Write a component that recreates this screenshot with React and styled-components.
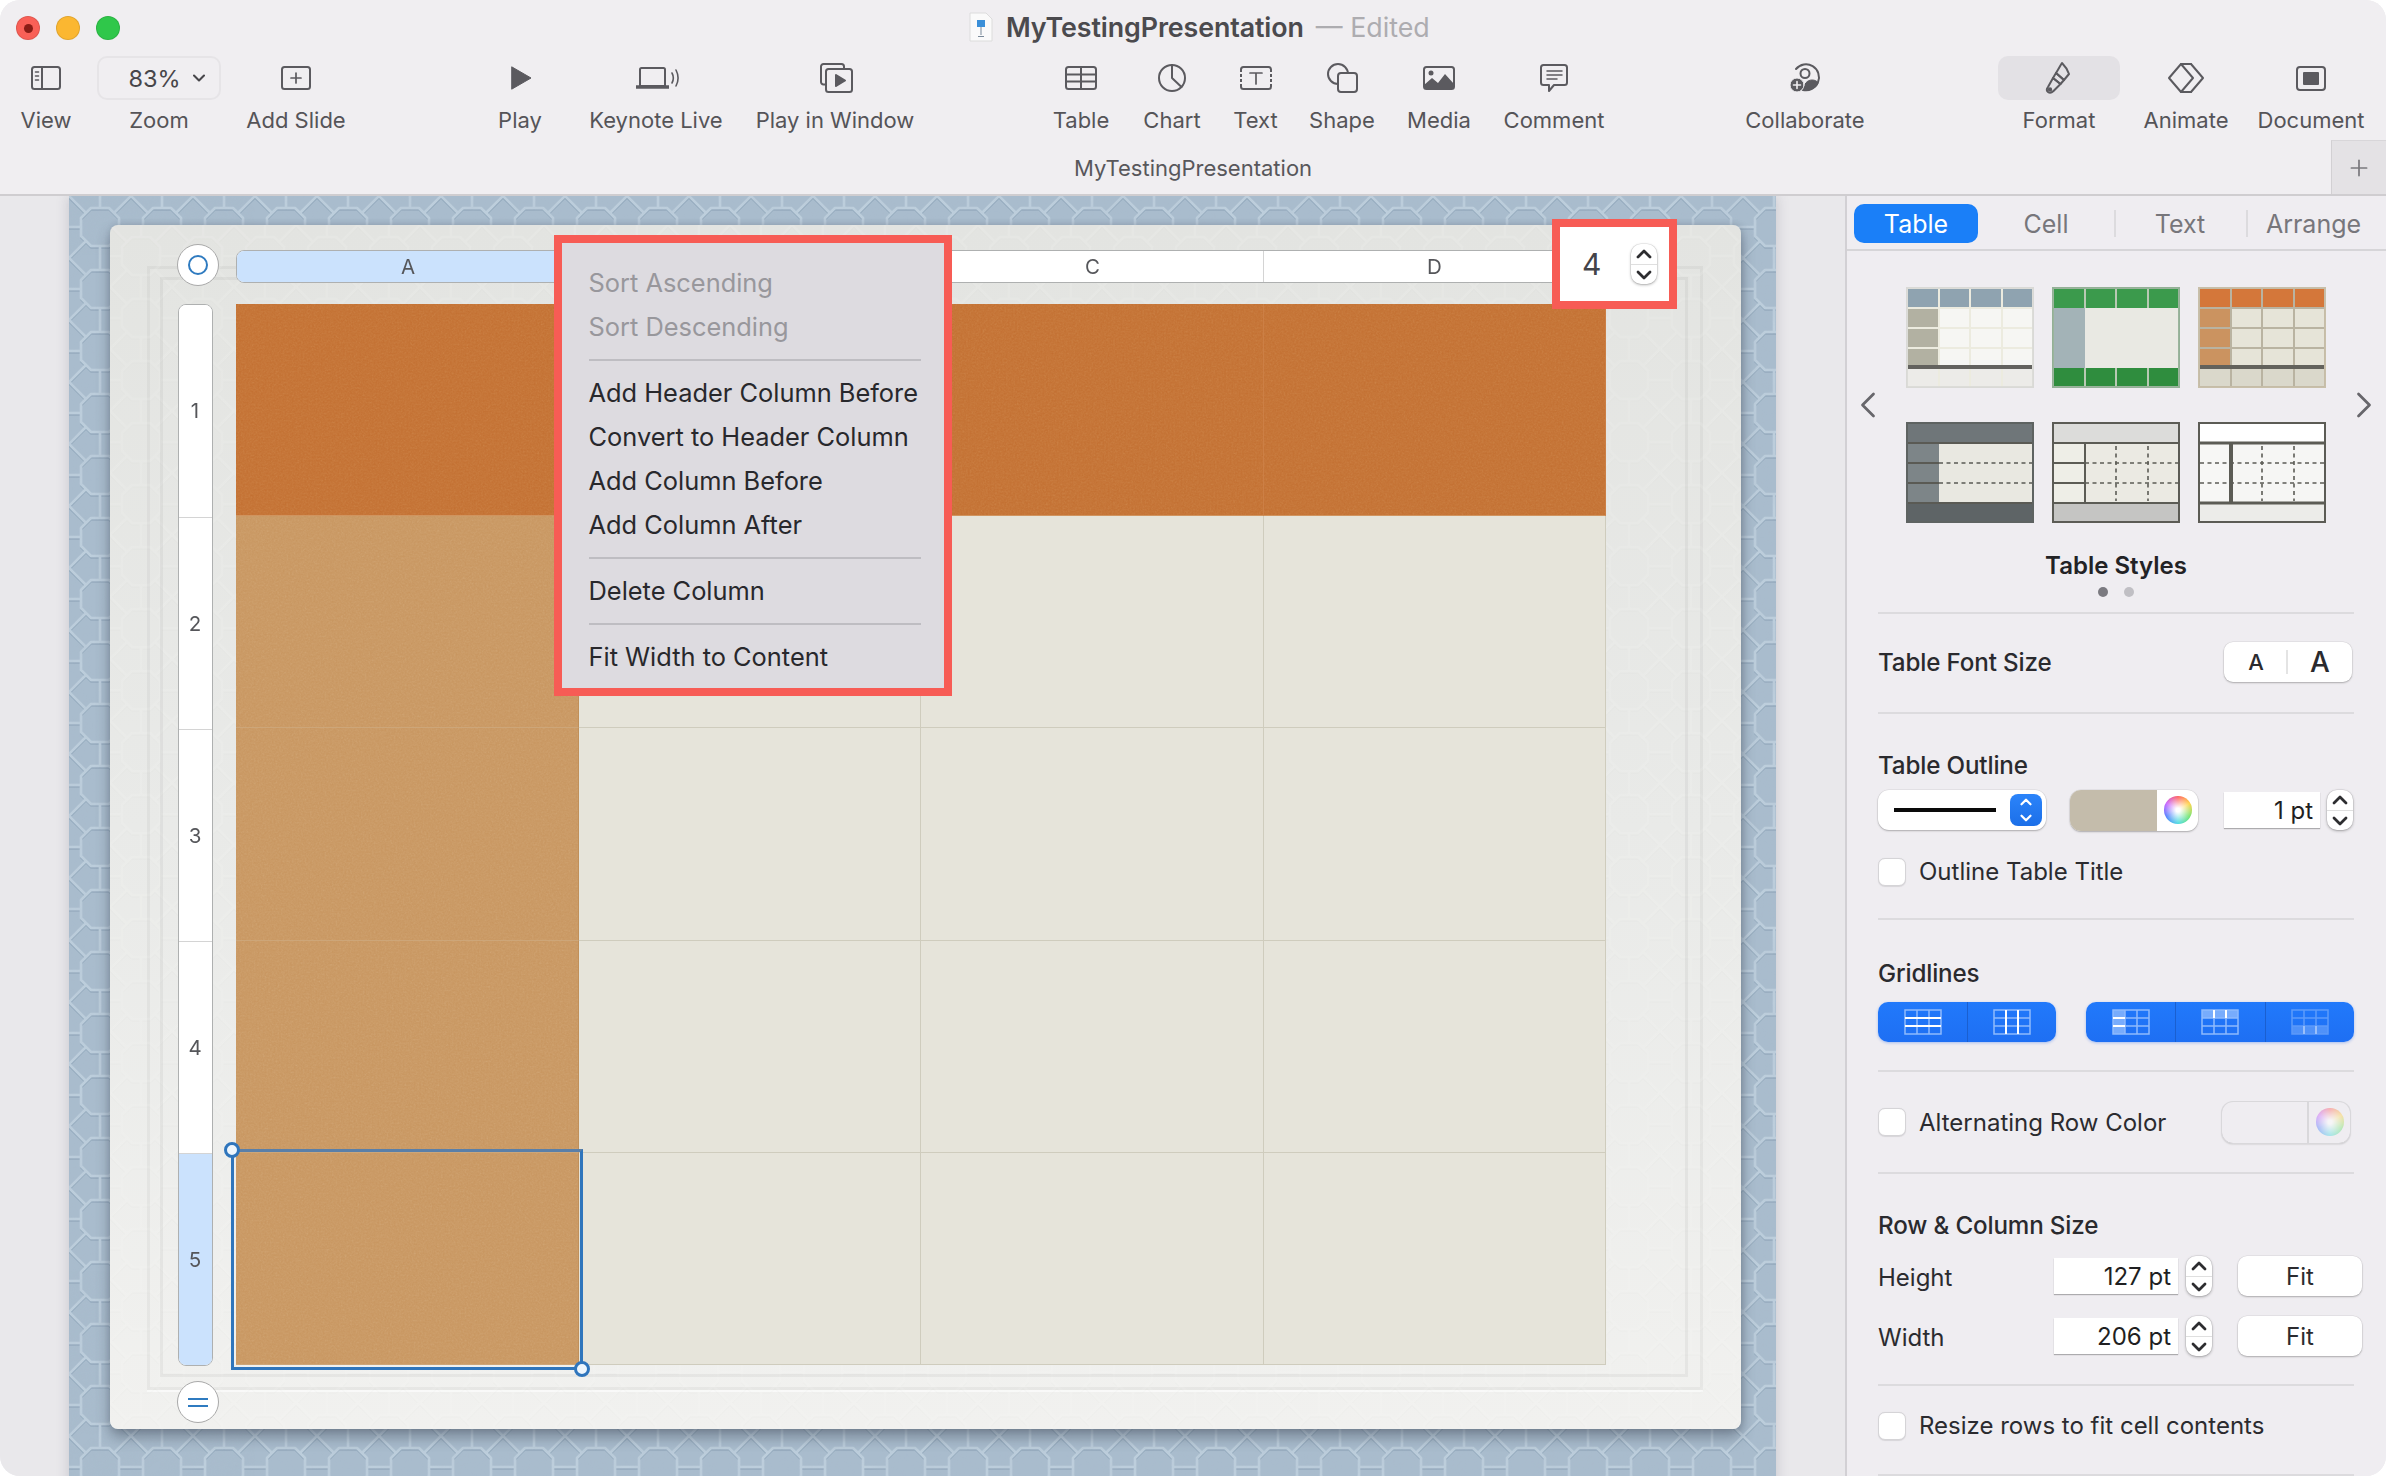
import React from "react";
import styled, { createGlobalStyle, css } from "styled-components";
import { ChevronUp, ChevronDown, ChevronLeft, ChevronRight, Plus } from "lucide-react";

const Global = createGlobalStyle`
  html, body { margin: 0; padding: 0; background: #fff; }
  body { font-family: Inter, "Liberation Sans", sans-serif; -webkit-font-smoothing: antialiased; }
  * { box-sizing: border-box; }
`;

const Window = styled.div`
  width: 2386px; height: 1476px; display: flex; flex-direction: column;
  border-radius: 20px; overflow: hidden; background: #efedf1;
`;
const Toolbar = styled.header`
  height: 196px; flex: none; background: #f0eef1; border-bottom: 2px solid #cfcdd0;
  display: flex; flex-direction: column; color: #545357;
`;
const TitleBar = styled.div`
  height: 56px; display: flex; align-items: center; padding-left: 16px; position: relative;
`;
const Light = styled.span`
  width: 24px; height: 24px; border-radius: 50%; margin-right: 16px; background: ${p => p.$c};
  border: 1px solid rgba(0,0,0,.1); display: flex; align-items: center; justify-content: center;
  &::after { content: ""; width: 9px; height: 9px; border-radius: 50%; background: ${p => p.$dot || "transparent"}; }
`;
const TitleGroup = styled.div`
  display: flex; align-items: center; margin-left: 832px; margin-top: -2px;
`;
const DocGlyph = styled.svg`width: 26px; height: 30px; margin-right: 12px; flex: none;`;
const TitleText = styled.span`font-size: 26.8px; font-weight: 600; color: #4b4a4e; letter-spacing: -0.1px;`;
const TitleEdited = styled.span`font-size: 26.8px; font-weight: 400; color: #adacb0; margin-left: 12px;`;
const ToolRow = styled.div`display: flex; height: 84px; align-items: flex-start;`;
const Tool = styled.div`
  width: ${p => p.$w}px; margin-left: ${p => p.$ml}px; flex: none;
  display: flex; flex-direction: column; align-items: center; gap: 4.5px;
`;
const ToolIcon = styled.div`
  height: 44px; align-self: stretch; display: flex; align-items: center; justify-content: center; color: #5b5a5f;
  border-radius: 10px; background: ${p => p.$active ? "#e3e1e5" : "transparent"};
`;
const ZoomBox = styled(ToolIcon)`
  border: 2px solid #e6e4e7; gap: 8px; font-size: 23.5px; color: #47464a; padding-left: 19px;
`;
const ToolLabel = styled.span`font-size: 22px; line-height: 30px; white-space: nowrap; color: #555458;`;
const DocBar = styled.div`
  flex: 1; display: grid; grid-template-columns: 1fr auto 1fr; align-items: stretch;
`;
const DocName = styled.div`grid-column: 2; font-size: 22px; color: #58575b; display: flex; align-items: center; padding-top: 2px;`;
const PlusTab = styled.div`
  grid-column: 3; justify-self: end; width: 55px; background: #e4e2e5; border-left: 1px solid #d2d0d3; border-top: 1px solid #d8d6d9;
  display: flex; align-items: center; justify-content: center; color: #7a797d;
`;

const Main = styled.div`flex: 1; display: flex; min-height: 0;`;
const Canvas = styled.main`
  width: 1845px; flex: none; background: #e9e8eb; padding-left: 69px; overflow: hidden;
`;
const Slide = styled.div`
  width: 1707px; height: 1300px; position: relative; padding: 29px 0 0 41px; background: #a9bccd;
  box-shadow: 0 0 12px rgba(70,70,90,.22);
`;
const Texture = styled.svg`position: absolute; inset: 0; width: 100%; height: 100%;`;
const Panel = styled.div`
  width: 1631px; height: 1204px; position: relative; border-radius: 8px; padding: 25px 0 0 67.5px;
  background: linear-gradient(180deg, #e3e4e1 0%, #e9eae8 50%, #f1f1ef 100%);
  box-shadow: 0 8px 14px rgba(50,60,75,.42), 1px 0 6px rgba(50,60,75,.2);
  &::before {
    content: ""; position: absolute; left: 37px; top: 41px; right: 38px; bottom: 39px;
    border: 3px solid rgba(0,0,0,.04); box-shadow: 0 2px 0 rgba(255,255,255,.6);
  }
  &::after {
    content: ""; position: absolute; left: 50px; top: 52px; right: 53px; bottom: 52px;
    border: 3px solid rgba(0,0,0,.045);
  }
`;
const PanelTexture = styled(Texture)`opacity: .14; border-radius: 8px;`;
const Sheet = styled.div`
  position: relative; z-index: 1; display: grid; margin-top: -0.5px;
  grid-template-columns: 35px 23.5px 1370px; grid-template-rows: 33px 21px 1062px;
`;
const ColHeader = styled.div`
  grid-column: 3; grid-row: 1; display: grid; grid-template-columns: repeat(4, 1fr);
  background: #fff; border: 1px solid #aeb0b0; border-radius: 8px; overflow: hidden;
`;
const ColCell = styled.div`
  display: flex; align-items: center; justify-content: center; font-size: 20.5px; color: #55565a;
  background: ${p => p.$on ? "#cbe2fd" : "#fff"};
  & + & { border-left: 1px solid #d4d4d4; }
`;
const RowHeader = styled.div`
  grid-column: 1; grid-row: 3; display: grid; grid-template-rows: repeat(5, 1fr);
  background: #fff; border: 1px solid #aeb0b0; border-radius: 8px; overflow: hidden;
`;
const RowCell = styled(ColCell)`
  & + & { border-left: 0; border-top: 1px solid #d4d4d4; }
`;
const Table = styled.div`
  grid-column: 3; grid-row: 3; display: grid; grid-template-columns: repeat(4, 1fr); grid-template-rows: repeat(5, 1fr);
`;
const cellKinds = {
  head: css`background: #c37032; border-right: 1px solid #cc7f45; border-bottom: 1px solid #d0945f;`,
  side: css`background: #c89660; border-right: 1px solid #c0905a; border-bottom: 1px solid #cda679;`,
  body: css`background: #e6e4da; border-right: 1px solid #cfccbd; border-bottom: 1px solid #cfccbd;`,
};
const Cell = styled.div`position: relative; overflow: hidden; ${p => cellKinds[p.$kind]}`;
const GrainSvg = styled.svg`position: absolute; inset: 0; width: 100%; height: 100%; opacity: .45; mix-blend-mode: soft-light;`;
const HandleBase = styled.div`
  position: absolute; left: 67px; width: 42px; height: 42px; border-radius: 50%; background: #fff; z-index: 2;
  border: 1px solid #a9a9a9; display: flex; align-items: center; justify-content: center;
`;
const Ring = styled.span`width: 20px; height: 20px; border-radius: 50%; border: 2.5px solid #2f7bc0;`;
const Bars = styled.span`width: 20px; height: 9px; border-top: 2.5px solid #2f7bc0; border-bottom: 2.5px solid #2f7bc0;`;
const Selection = styled.div`
  position: absolute; left: 121px; top: 924px; width: 352px; height: 221px; z-index: 2;
  border: 3px solid #2f75bc; border-top-color: #5a7fa8;
`;
const Knob = styled.span`
  position: absolute; width: 16px; height: 16px; border-radius: 50%; background: #eef6fd; border: 3px solid #2f75bc;
  ${p => p.$end ? "right: -10px; bottom: -10px;" : "left: -10px; top: -10px;"}
`;
const Menu = styled.div`
  position: absolute; left: 443.5px; top: 10px; width: 398.5px; height: 461px; z-index: 3;
  border: 8.5px solid #f75c55; background: #dddbe0; padding: 18px 0 0 27px;
`;
const MenuItem = styled.div`
  height: 44px; line-height: 44px; font-size: 25.4px; white-space: nowrap;
  color: ${p => p.$off ? "#98979c" : "#28282c"};
`;
const MenuSep = styled.div`height: 2px; width: 332px; background: #bebdc2; margin: 10px 0;`;
const Count = styled.div`
  position: absolute; left: 1442px; top: -6px; width: 125px; height: 90px; z-index: 3;
  border: 8.5px solid #f75c55; background: #fff; display: flex; align-items: center; padding-left: 22px; gap: 30px;
`;
const CountNum = styled.span`font-size: 30px; color: #444449;`;

const StepBox = styled.div`
  width: 26px; height: 40px; flex: none; border-radius: 10px; background: #fff; margin-left: ${p => p.$ml || 0}px;
  box-shadow: 0 0 0 .5px rgba(0,0,0,.1), 0 1px 3px rgba(0,0,0,.3);
  display: flex; flex-direction: column; align-items: center; justify-content: center; color: #2d2d30; overflow: hidden;
`;
const StepIcon = styled.span`height: 20px; width: 100%; display: flex; align-items: center; justify-content: center;
  svg { flex: none; }
  & + & { border-top: 1.5px solid #dfdfdf; }
`;

const Sidebar = styled.aside`
  flex: 1; border-left: 2px solid #d2d0d4; background: #efedf1; color: #2b2b2f; display: flex; flex-direction: column; overflow: hidden;
`;
const Tabs = styled.div`
  height: 55px; flex: none; padding: 8px 0 6px 7px; display: flex; align-items: stretch; border-bottom: 2px solid #d6d5d8;
`;
const Tab = styled.div`
  width: ${p => p.$w}px; flex: none; font-size: 25px; display: flex; align-items: center; justify-content: center; position: relative;
  color: ${p => p.$on ? "#fff" : "#77767b"}; background: ${p => p.$on ? "#1a7ff8" : "transparent"}; border-radius: 10px;
  ${p => p.$sep && css`&::before { content: ""; position: absolute; left: 0; top: 6px; bottom: 6px; width: 2px; background: #dcdbde; }`}
`;
const SideBody = styled.div`margin: 0 31px; width: 476px; display: flex; flex-direction: column;`;
const Section = styled.section`
  flex: none; border-bottom: 2px solid #dcdbde; padding: ${p => p.$pad || "0"};
  height: ${p => p.$h}px;
`;
const CenterRow = styled(Section)`display: flex; align-items: center; justify-content: space-between;`;
const Carousel = styled.div`
  width: 540px; margin-left: -32px; display: flex; align-items: center; justify-content: space-between; color: #67666b;
`;
const Thumbs = styled.div`display: grid; grid-template-columns: repeat(3, 128px); grid-template-rows: 101px 101px; gap: 34px 18px;`;
const StylesName = styled.div`text-align: center; font-size: 24px; font-weight: 600; line-height: 30px; margin-top: 28px; color: #222225;`;
const Dots = styled.div`display: flex; justify-content: center; gap: 16px; margin-top: 6px;`;
const Dot = styled.span`width: 10px; height: 10px; border-radius: 50%; background: ${p => p.$on ? "#7b7a80" : "#c0bfc4"};`;
const Heading = styled.div`font-size: 24.2px; font-weight: 500; line-height: 30px; color: #2a2a2e; letter-spacing: -0.15px;`;
const FontBtns = styled.div`
  width: 128px; height: 40px; background: #fff; border-radius: 9px; box-shadow: 0 0 0 .5px rgba(0,0,0,.08), 0 1px 2px rgba(0,0,0,.25);
  display: grid; grid-template-columns: 1fr 1fr; margin-right: 2px; margin-top: -2px;
`;
const FontA = styled.span`
  display: flex; align-items: center; justify-content: center; font-weight: 500; color: #2a2a2e; font-size: ${p => p.$s}px; position: relative;
  ${p => p.$sep && css`&::after { content: ""; position: absolute; right: 0; top: 8px; bottom: 8px; width: 2px; background: #e4e4e4; }`}
`;
const Controls = styled.div`display: flex; align-items: center; height: 42px; margin-top: 8px;`;
const LineSelect = styled.div`
  width: 168px; height: 40px; background: #fff; border-radius: 11px; box-shadow: 0 0 0 .5px rgba(0,0,0,.08), 0 1px 2px rgba(0,0,0,.25);
  display: flex; align-items: center; padding: 0 4px 0 16px; justify-content: space-between;
`;
const LineStroke = styled.span`width: 102px; height: 4px; background: #0a0a0a;`;
const BlueStep = styled.span`
  width: 32px; height: 32px; border-radius: 8px; background: linear-gradient(#2b84fa, #1c6fe8); color: #fff; overflow: hidden;
  display: flex; flex-direction: column; align-items: center; justify-content: center; line-height: 0;
  svg { flex: none; margin: -1px 0; }
`;
const Well = styled.div`
  width: 128px; height: 41px; margin-left: ${p => p.$ml || 0}px; margin-right: ${p => p.$mr || 0}px; border-radius: 11px; overflow: hidden; flex: none;
  background: ${p => p.$faded ? "transparent" : "#fff"};
  box-shadow: 0 0 0 ${p => p.$faded ? "1px #d9d8db" : ".5px rgba(0,0,0,.08)"}, 0 1px 2px rgba(0,0,0,.25);
  display: flex;
`;
const Swatch = styled.span`
  width: 87px; background: ${p => p.$c || "transparent"}; flex: none; ${p => p.$faded && "border-right: 2px solid #d9d8db;"}
`;
const WheelCell = styled.span`flex: 1; display: flex; align-items: center; justify-content: center;`;
const Wheel = styled.span`
  width: 28px; height: 28px; border-radius: 50%; opacity: ${p => p.$faded ? .45 : 1};
  background: radial-gradient(circle, #fff 10%, rgba(255,255,255,0) 72%),
    conic-gradient(#ff5a5a, #ffd23f, #6be36b, #45d9e0, #4a7bff, #c65cff, #ff5a5a);
`;
const Field = styled.div`
  width: ${p => p.$w}px; height: 36px; flex: none; margin-left: ${p => p.$ml || 0}px; background: #fff; box-shadow: 0 1px 1px rgba(0,0,0,.28);
  display: flex; align-items: center; justify-content: flex-end; padding-right: 7px; font-size: 24px; color: #1f1f22;
`;
const CheckRow = styled.label`display: flex; align-items: center; gap: 13px; font-size: 24px; color: #2b2b2f; margin-top: ${p => p.$mt || 0}px;`;
const Box = styled.span`
  width: 28px; height: 28px; flex: none; background: #fff; border-radius: 7px; border: 1px solid #d5d4d7;
  box-shadow: 0 .5px 1px rgba(0,0,0,.1);
`;
const GridButtons = styled.div`display: flex; justify-content: space-between; margin-top: 13px;`;
const Seg = styled.div`
  width: ${p => p.$w}px; height: 40px; border-radius: 10px; background: linear-gradient(#2179fb, #1e6ff3);
  display: grid; grid-auto-flow: column; grid-auto-columns: 1fr; box-shadow: 0 1px 3px rgba(30,100,240,.35);
`;
const SegCell = styled.div`
  display: flex; align-items: center; justify-content: center;
  & + & { border-left: 1.5px solid #1a5fd0; }
`;
const SizeRow = styled.div`display: flex; align-items: center; margin-top: ${p => p.$mt}px;`;
const SizeLabel = styled.span`width: 176px; flex: none; font-size: 24px; padding-top: 3px; color: #2b2b2f;`;
const FitBtn = styled.div`
  width: 124px; height: 40px; flex: none; margin-left: 26px; margin-right: -8px; background: #fff; border-radius: 9px; font-size: 24px; color: #2b2b2f;
  box-shadow: 0 0 0 .5px rgba(0,0,0,.08), 0 1px 2px rgba(0,0,0,.25); display: flex; align-items: center; justify-content: center;
`;

/* ---------- drawings ---------- */
const I = ({ w = 36, h = 32, children, ...r }) => (
  <svg width={w} height={h} viewBox={`0 0 ${w} ${h}`} fill="none" stroke="currentColor" strokeWidth="2" strokeLinejoin="round" strokeLinecap="round" {...r}>{children}</svg>
);
const icons = {
  view: <I><rect x="4" y="5" width="28" height="22" rx="2.5"/><path d="M14 5v22"/><path d="M7.5 10h3M7.5 14h3M7.5 18h3" strokeWidth="1.6"/></I>,
  add: <I><rect x="4" y="5" width="28" height="22" rx="2.5"/><path d="M18 11v10M13 16h10" strokeWidth="1.7"/></I>,
  play: <I><path d="M10 5l19 11L10 27z" fill="currentColor" strokeWidth="1"/></I>,
  live: <I w={50} h={32}><path d="M9 7.5a1.5 1.5 0 0 1 1.5-1.5h22a1.5 1.5 0 0 1 1.5 1.5V24H9z"/><path d="M5 25h33" strokeWidth="3.4" strokeLinecap="butt"/><path d="M41 11c1.6 3 1.6 7 0 10M45 8c2.6 5 2.6 11 0 16" strokeWidth="1.6"/></I>,
  window: <I w={38} h={34}><path d="M28 8V5.500A2.500 2.500 0 0 0 25.500 3H7.500A2.500 2.500 0 0 0 5 5.500V21a2.500 2.500 0 0 0 2.500 2.500H10"/><rect x="10" y="8" width="26" height="23" rx="2.500" fill="#f0eef1"/><path d="M20 14l9 5.500-9 5.500z" fill="currentColor"/></I>,
  table: <I><rect x="3" y="5" width="30" height="22" rx="2.500"/><path d="M3 12.500h30M3 19.500h30M18 5v22"/></I>,
  chart: <I h={34}><circle cx="18" cy="17" r="13"/><path d="M18 17V4M18 17l9.500 9"/></I>,
  text: <I><rect x="3" y="5" width="30" height="22" rx="2.500"/><path d="M12 11h12M18 11v11" strokeWidth="1.700"/><path d="M3 10v2M3 15v2M3 20v2M33 10v2M33 15v2M33 20v2" stroke="#f0eef1" strokeWidth="2.400" strokeLinecap="butt"/></I>,
  shape: <I h={34}><circle cx="14" cy="13" r="10"/><rect x="14" y="12" width="19" height="19" rx="3" fill="#f0eef1"/></I>,
  media: <I><rect x="3" y="5" width="30" height="22" rx="2.500"/><path d="M3 27V23l8-7 6 5 7-9 9 10v5z" fill="currentColor" stroke="none"/><circle cx="10" cy="11" r="2.500" fill="currentColor" stroke="none"/></I>,
  comment: <I h={30}><path d="M6.500 2h21A2.500 2.500 0 0 1 30 4.500v15a2.500 2.500 0 0 1-2.500 2.500H17l-5 6v-6H6.500A2.500 2.500 0 0 1 4 19.500v-15A2.500 2.500 0 0 1 6.500 2z" transform="translate(1 0)"/><path d="M11 8h15M11 12h15M11 16h10" strokeWidth="1.500"/></I>,
  collab: <I h={34}><path d="M9 8a13 13 0 1 1 7 21"/><circle cx="18" cy="12.500" r="4.500"/><path d="M16 29c1-6 4-10 9-10 3 0 5 1 6 3-1 4-6 7-15 7z" fill="currentColor" strokeWidth="1"/><circle cx="10" cy="24" r="7" fill="currentColor" stroke="#f0eef1" strokeWidth="1"/><path d="M10 20.500v7M6.500 24h7" stroke="#f0eef1" strokeWidth="1.600"/></I>,
  format: <I h={36}><path d="M21 3c3 3 6 8 7 11l-5 6-8-7c2-3 4-7 6-10z"/><path d="M15 13l8 7-3.500 4-7.500-6z"/><path d="M12 18l7.500 6-7 7c-2 2-4 2.200-5.500 1s-1.500-3 0-5z"/><circle cx="9" cy="29.500" r="1.200" fill="currentColor"/></I>,
  animate: <I w={40} h={32}><path d="M15 2L3 16l12 14 12-14z"/><path d="M25 2l12 14-12 14"/><path d="M15 2h10M15 30h10"/></I>,
  document: <I><rect x="4" y="5" width="28" height="23" rx="3"/><rect x="10" y="10" width="16" height="13" rx="1" fill="currentColor" stroke="none"/></I>,
};

const tools = [
  ["View", "view", 76, 8], ["Zoom", "zoom", 124, 13], ["Add Slide", "add", 110, 20],
  ["Play", "play", 80, 129], ["Keynote Live", "live", 140, 26], ["Play in Window", "window", 170, 24],
  ["Table", "table", 70, 126], ["Chart", "chart", 76, 18], ["Text", "text", 60, 15.5], ["Shape", "shape", 76, 18.5],
  ["Media", "media", 76, 21], ["Comment", "comment", 110, 22], ["Collaborate", "collab", 130, 131],
  ["Format", "format", 122, 128], ["Animate", "animate", 100, 16], ["Document", "document", 110, 20],
];

const hexPath = "M22 12h18l10 10v18l-10 10H22L12 40V22z M0 0L17 17M62 0L45 17M0 62L17 45M62 62L45 45 M31 0v12M31 50v12M0 31h12M50 31h12";
const HexPattern = ({ id, light, dark, base }) => (
  <>
    <defs>
      <pattern id={id} width="62" height="62" patternUnits="userSpaceOnUse">
        <path d={hexPath} transform="translate(0 2)" stroke={dark} strokeWidth="1.600" fill="none" opacity=".7"/>
        <path d={hexPath} stroke={light} strokeWidth="2.600" fill="none" strokeLinejoin="round"/>
      </pattern>
      <filter id={id + "n"} x="0" y="0" width="100%" height="100%">
        <feTurbulence type="fractalNoise" baseFrequency=".04" numOctaves="3" seed="7"/>
        <feColorMatrix values="0 0 0 0 .40  0 0 0 0 .50  0 0 0 0 .60  0 0 0 .9 -.25"/>
      </filter>
    </defs>
    {base && <rect width="100%" height="100%" fill={base}/>}
    <rect width="100%" height="100%" fill={`url(#${id})`}/>
    {base && <rect width="100%" height="100%" filter={`url(#${id}n)`} opacity=".4"/>}
  </>
);

const Grain = ({ seed }) => (
  <GrainSvg aria-hidden="true">
    <filter id={`g${seed}`} x="0" y="0" width="100%" height="100%">
      <feTurbulence type="fractalNoise" baseFrequency=".55" numOctaves="3" seed={seed}/>
      <feColorMatrix type="saturate" values="0"/>
    </filter>
    <rect width="100%" height="100%" filter={`url(#g${seed})`}/>
  </GrainSvg>
);

const Stepper = ({ ml }) => (
  <StepBox $ml={ml}>
    <StepIcon><ChevronUp size={24} strokeWidth={2.8}/></StepIcon>
    <StepIcon><ChevronDown size={24} strokeWidth={2.8}/></StepIcon>
  </StepBox>
);

/* table style previews */
const Thumb = ({ t }) => {
  const { border, head, foot, side, body, line, thick, solidV, dashed, noInner, headCols = true, bw = 2, rowLine } = t;
  return (
    <svg width="128" height="101" viewBox="0 0 128 101">
      <rect width="128" height="101" fill={line || border}/>
      <rect x={bw} y={bw} width={128 - 2 * bw} height={101 - 2 * bw} fill={body}/>
      <rect x={bw} y={21} width="31" height="60" fill={side}/>
      <rect x={bw} y={bw} width={128 - 2 * bw} height={19} fill={head}/>
      <rect x={bw} y="81" width={128 - 2 * bw} height={18} fill={foot}/>
      {!noInner && [21, 41, 61].map(y => <rect key={y} x={bw} y={y - 1} width="124" height="2" fill={line}/>)}
      {!noInner && [33, 64, 96].map(x => <rect key={x} x={x - 1} y={bw} width="2" height="97" fill={line}/>)}
      {headCols && noInner && [33, 64, 96].map(x => (
        <g key={x}><rect x={x - 1} y="2" width="2" height="19" fill={line}/><rect x={x - 1} y="81" width="2" height="18" fill={line}/></g>
      ))}
      {dashed && [41, 61].map(y => <path key={y} d={`M${t.dashFrom || 33} ${y}H126`} stroke={thick} strokeWidth="1.600" strokeDasharray="4 3.500"/>)}
      {dashed && t.dashV && [64, 96].map(x => <path key={x} d={`M${x} 24V79`} stroke={thick} strokeWidth="1.600" strokeDasharray="4 3.500"/>)}
      {t.lines}
      {rowLine && <rect x="2" y="78" width="124" height="4" fill={rowLine}/>}
      {solidV && <rect x={33 - (t.svw || 1)} y={21} width={t.svw ? t.svw * 2 : 2} height="60" fill={thick}/>}
      <rect x=".9" y=".9" width="126.200" height="99.200" fill="none" stroke={border} strokeWidth="1.800"/>
    </svg>
  );
};
const frameLines = (c, h = 2) => <><rect x="2" y={21 - h / 2} width="124" height={h} fill={c}/><rect x="2" y={81 - h / 2} width="124" height={h} fill={c}/></>;
const sideLines = c => <><rect x="2" y="40" width="31" height="2" fill={c}/><rect x="2" y="60" width="31" height="2" fill={c}/></>;
const styledThumbs = [
  { border: "#d9d9d6", head: "#8fa3b0", side: "#b2b1a2", body: "#f6f6f3", foot: "#ecebe8", line: "#ecebdf", rowLine: "#63625e" },
  { border: "#93b096", head: "#3b9a4c", side: "#a3b3b7", body: "#e9e9e3", foot: "#2f8d3e", line: "#b8c9b3", noInner: true },
  { border: "#c8bfa9", head: "#d4773a", side: "#cb9360", body: "#e6e4d8", foot: "#dad8cb", line: "#b9b3a1", rowLine: "#63625c" },
  { border: "#5e6362", head: "#6f7679", side: "#7d8588", body: "#e9e8e1", foot: "#5e6466", thick: "#5a5a54", noInner: true, headCols: false, dashed: true,
    line: "#5e6362", lines: <>{frameLines("#5a5a54")}{sideLines("#5a5a54")}</> },
  { border: "#5c5c55", head: "#dcdcda", side: "#eeeee7", body: "#ebeae3", foot: "#c5c5c3", thick: "#5c5c55", noInner: true, headCols: false, dashed: true, dashV: true, solidV: true, line: "#5c5c55",
    lines: <>{frameLines("#5c5c55")}{sideLines("#5c5c55")}</> },
  { border: "#5c5c55", head: "#ffffff", side: "#f7f7f5", body: "#f6f6f4", foot: "#ecece9", thick: "#5c5c55", noInner: true, headCols: false, dashed: true, dashV: true, dashFrom: 2, solidV: true, svw: 2, line: "#5c5c55",
    lines: frameLines("#5c5c55", 3) },
];

const LB = "#8fbafc";
const GridIcon = ({ h, v, fill, dim }) => {
  const xs = [13, 25], ys = [9, 17];
  return (
    <svg width={38} height={26} viewBox="0 0 38 26" opacity={dim ? .55 : 1} fill="none">
      {fill && <rect {...fill} fill={LB} opacity=".8"/>}
      <rect x="1" y="1" width="36" height="24" stroke={LB} strokeWidth="1.500"/>
      {xs.map(x => <path key={x} d={`M${x} 1V25`} stroke={LB} strokeWidth="1.500"/>)}
      {ys.map(y => <path key={y} d={`M1 ${y}H37`} stroke={LB} strokeWidth="1.500"/>)}
      {h && ys.map(y => <path key={y} d={`M${h[0]} ${y}H${h[1]}`} stroke="#fff" strokeWidth="2"/>)}
      {v && xs.map(x => <path key={x} d={`M${x} ${v[0]}V${v[1]}`} stroke="#fff" strokeWidth="2"/>)}
    </svg>
  );
};

const colHeads = ["A", "", "C", "D"];

export default function App() {
  return (
    <>
      <Global />
      <Window>
        <Toolbar>
          <TitleBar>
            <Light $c="#f96057" $dot="#8a1d16" />
            <Light $c="#fbb731" />
            <Light $c="#2fc74a" />
            <TitleGroup>
              <DocGlyph viewBox="0 0 26 30">
                <path d="M2 1h16l6 6v22H2z" fill="#fafafa" stroke="#dcdcdc"/>
                <rect x="9" y="8" width="8" height="7" fill="#3a8fd8"/>
                <path d="M12.500 15h1v8h-1zM10 24h6v1h-6z" fill="#7a8a9a"/>
              </DocGlyph>
              <TitleText>MyTestingPresentation</TitleText>
              <TitleEdited>— Edited</TitleEdited>
            </TitleGroup>
          </TitleBar>
          <ToolRow>
            {tools.map(([label, key, w, ml]) => (
              <Tool key={label} $w={w} $ml={ml}>
                {key === "zoom" ? (
                  <ZoomBox>83%<ChevronDown size={20} strokeWidth={2.5} /></ZoomBox>
                ) : (
                  <ToolIcon $active={key === "format"}>{icons[key]}</ToolIcon>
                )}
                <ToolLabel>{label}</ToolLabel>
              </Tool>
            ))}
          </ToolRow>
          <DocBar>
            <DocName>MyTestingPresentation</DocName>
            <PlusTab><Plus size={26} strokeWidth={1.6} /></PlusTab>
          </DocBar>
        </Toolbar>
        <Main>
          <Canvas>
            <Slide>
              <Texture aria-hidden="true"><HexPattern id="hexa" base="#a9bccd" light="#bdcedc" dark="#8ba2b6" /></Texture>
              <Panel>
                <PanelTexture aria-hidden="true"><HexPattern id="hexb" light="#f8f9f6" dark="#d3d5d0" /></PanelTexture>
                <HandleBase style={{ top: 19 }}><Ring /></HandleBase>
                <HandleBase style={{ top: 1156 }}><Bars /></HandleBase>
                <Sheet>
                  <ColHeader>
                    {colHeads.map((c, i) => <ColCell key={i} $on={i === 0}>{c}</ColCell>)}
                  </ColHeader>
                  <RowHeader>
                    {[1, 2, 3, 4, 5].map(n => <RowCell key={n} $on={n === 5}>{n}</RowCell>)}
                  </RowHeader>
                  <Table>
                    {[0, 1, 2, 3, 4].map(r => [0, 1, 2, 3].map(c => {
                      const kind = r === 0 ? "head" : c === 0 ? "side" : "body";
                      return (
                        <Cell key={`${r}${c}`} $kind={kind}>
                          {kind !== "body" && <Grain seed={r * 4 + c + 1} />}
                        </Cell>
                      );
                    }))}
                  </Table>
                </Sheet>
                <Selection><Knob /><Knob $end /></Selection>
                <Menu>
                  <MenuItem $off>Sort Ascending</MenuItem>
                  <MenuItem $off>Sort Descending</MenuItem>
                  <MenuSep />
                  <MenuItem>Add Header Column Before</MenuItem>
                  <MenuItem>Convert to Header Column</MenuItem>
                  <MenuItem>Add Column Before</MenuItem>
                  <MenuItem>Add Column After</MenuItem>
                  <MenuSep />
                  <MenuItem>Delete Column</MenuItem>
                  <MenuSep />
                  <MenuItem>Fit Width to Content</MenuItem>
                </Menu>
                <Count><CountNum>4</CountNum><Stepper /></Count>
              </Panel>
            </Slide>
          </Canvas>
          <Sidebar>
            <Tabs>
              <Tab $w={124} $on>Table</Tab>
              <Tab $w={136}>Cell</Tab>
              <Tab $w={132} $sep>Text</Tab>
              <Tab $w={135} $sep>Arrange</Tab>
            </Tabs>
            <SideBody>
              <Section $pad="36px 0 0" $h={363}>
                <Carousel>
                  <ChevronLeft size={44} strokeWidth={1.5} />
                  <Thumbs>{styledThumbs.map((t, i) => <Thumb key={i} t={t} />)}</Thumbs>
                  <ChevronRight size={44} strokeWidth={1.5} />
                </Carousel>
                <StylesName>Table Styles</StylesName>
                <Dots><Dot $on /><Dot /></Dots>
              </Section>
              <CenterRow $h={100}>
                <Heading>Table Font Size</Heading>
                <FontBtns><FontA $s={22} $sep>A</FontA><FontA $s={28}>A</FontA></FontBtns>
              </CenterRow>
              <Section $pad="37px 0 0" $h={206}>
                <Heading>Table Outline</Heading>
                <Controls>
                  <LineSelect>
                    <LineStroke />
                    <BlueStep>
                      <ChevronUp size={18} strokeWidth={3} />
                      <ChevronDown size={18} strokeWidth={3} />
                    </BlueStep>
                  </LineSelect>
                  <Well $ml={24}><Swatch $c="#c4bcab" /><WheelCell><Wheel /></WheelCell></Well>
                  <Field $w={96} $ml={26}>1 pt</Field>
                  <Stepper ml={7} />
                </Controls>
                <CheckRow $mt={26}><Box />Outline Table Title</CheckRow>
              </Section>
              <Section $pad="39px 0 0" $h={152}>
                <Heading>Gridlines</Heading>
                <GridButtons>
                  <Seg $w={178}>
                    <SegCell><GridIcon h={[1, 37]} /></SegCell>
                    <SegCell><GridIcon v={[1, 25]} /></SegCell>
                  </Seg>
                  <Seg $w={268}>
                    <SegCell><GridIcon h={[1, 13]} fill={{ x: 1, y: 1, width: 12, height: 24 }} /></SegCell>
                    <SegCell><GridIcon v={[1, 9]} fill={{ x: 1, y: 1, width: 36, height: 8 }} /></SegCell>
                    <SegCell><GridIcon dim v={[17, 25]} fill={{ x: 1, y: 17, width: 36, height: 8 }} /></SegCell>
                  </Seg>
                </GridButtons>
              </Section>
              <CenterRow $h={102}>
                <CheckRow><Box />Alternating Row Color</CheckRow>
                <Well $faded $mr={4}><Swatch $faded /><WheelCell><Wheel $faded /></WheelCell></Well>
              </CenterRow>
              <Section $pad="37px 0 0" $h={212}>
                <Heading>Row &amp; Column Size</Heading>
                <SizeRow $mt={15}>
                  <SizeLabel>Height</SizeLabel><Field $w={124}>127 pt</Field>
                  <Stepper ml={8} />
                  <FitBtn>Fit</FitBtn>
                </SizeRow>
                <SizeRow $mt={20}>
                  <SizeLabel>Width</SizeLabel><Field $w={124}>206 pt</Field>
                  <Stepper ml={8} />
                  <FitBtn>Fit</FitBtn>
                </SizeRow>
              </Section>
              <Section $pad="25px 0 0" $h={90}>
                <CheckRow><Box />Resize rows to fit cell contents</CheckRow>
              </Section>
            </SideBody>
          </Sidebar>
        </Main>
      </Window>
    </>
  );
}
